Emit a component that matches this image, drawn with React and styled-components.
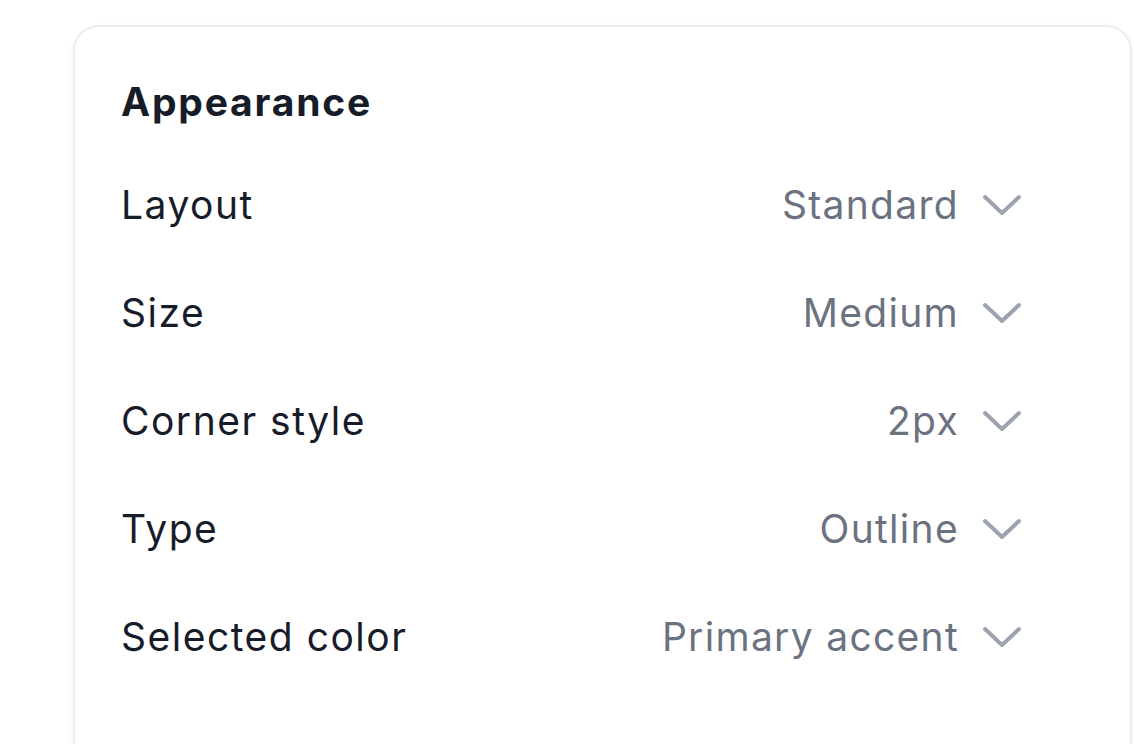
import React from "react";
import styled, { createGlobalStyle } from "styled-components";

const Global = createGlobalStyle`
  html, body { margin: 0; padding: 0; background: #ffffff; overflow: hidden; }
  body { font-family: Inter, "Noto Sans", "Liberation Sans", sans-serif; -webkit-font-smoothing: antialiased; }
`;

const Page = styled.div`
  width: 1134px;
  height: 744px;
  overflow: hidden;
  padding: 25px 2px 0 73px;
  box-sizing: border-box;
`;

const Card = styled.section`
  box-sizing: border-box;
  height: 820px;
  background: #ffffff;
  border: 2px solid #ededed;
  border-radius: 26px;
  box-shadow: 0 2px 8px rgba(0, 0, 0, 0.04);
  padding: 53px 46px 0 46px;
`;

const Content = styled.div`
  max-width: 900px;
`;

const Title = styled.h2`
  margin: 0 0 27px 0;
  font-size: 39px;
  line-height: 44px;
  font-weight: 700;
  color: #171c29;
  letter-spacing: 1.8px;
`;

const Row = styled.div`
  display: flex;
  align-items: center;
  justify-content: space-between;
  height: 108px;
`;

const Label = styled.span`
  font-size: 39px;
  line-height: 44px;
  color: #171c29;
  font-weight: 400;
  letter-spacing: 1.5px;
`;

const Select = styled.button`
  display: flex;
  align-items: center;
  gap: 24px;
  border: none;
  background: transparent;
  padding: 0;
  font: inherit;
  cursor: pointer;
`;

const Value = styled.span`
  font-size: 39px;
  line-height: 44px;
  color: #6b7280;
  letter-spacing: 1.3px;
`;

const Chevron = () => (
  <svg width="38" height="24" viewBox="0 0 38 24" fill="none">
    <polyline
      points="2,4 19,20 36,4"
      stroke="#9ca3af"
      strokeWidth="4"
      strokeLinecap="round"
      strokeLinejoin="round"
    />
  </svg>
);

const rows = [
  ["Layout", "Standard"],
  ["Size", "Medium"],
  ["Corner style", "2px"],
  ["Type", "Outline"],
  ["Selected color", "Primary accent"],
];

export default function App() {
  return (
    <>
      <Global />
      <Page>
        <Card>
          <Content>
            <Title>Appearance</Title>
            {rows.map(([label, value]) => (
              <Row key={label}>
                <Label>{label}</Label>
                <Select>
                  <Value>{value}</Value>
                  <Chevron />
                </Select>
              </Row>
            ))}
          </Content>
        </Card>
      </Page>
    </>
  );
}
